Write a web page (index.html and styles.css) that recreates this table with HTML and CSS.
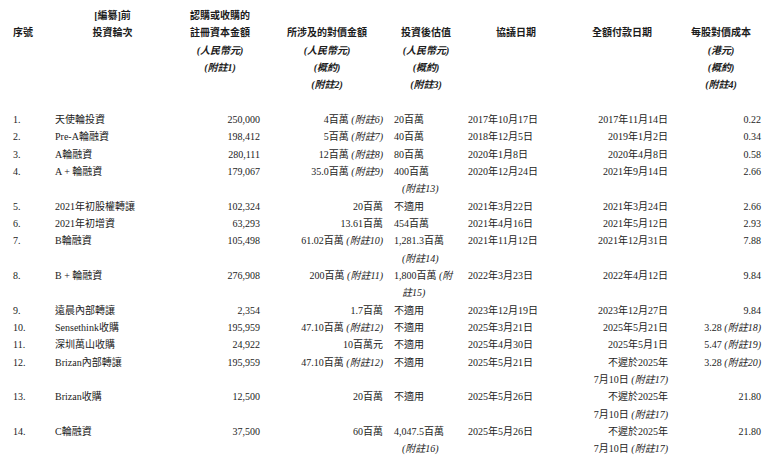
FILE: index.html
```html
<!DOCTYPE html>
<html lang="zh-Hant">
<head>
<meta charset="utf-8">
<link rel="stylesheet" href="styles.css">
</head>
<body>
<table class="tbl">
<colgroup>
<col class="c1"><col class="c2"><col class="c3"><col class="c4"><col class="c5"><col class="c6"><col class="c7"><col class="c8">
</colgroup>
<thead>
<tr>
<th class="h1 skip">序號</th>
<th>[編纂]前<br>投資輪次</th>
<th>認購或收購的<br>註冊資本金額<br><i>(人民幣元)</i><br><i>(附註1)</i></th>
<th class="skip">所涉及的對價金額<br><i>(人民幣元)</i><br><i>(概約)</i><br><i>(附註2)</i></th>
<th class="skip">投資後估值<br><i>(人民幣元)</i><br><i>(概約)</i><br><i>(附註3)</i></th>
<th class="skip">協議日期</th>
<th class="skip">全額付款日期</th>
<th class="skip">每股對價成本<br><i>(港元)</i><br><i>(概約)</i><br><i>(附註4)</i></th>
</tr>
<tr class="blank"><td colspan="8"></td></tr>
</thead>
<tbody>
<tr><td>1.</td><td>天使輪投資</td><td>250,000</td><td>4百萬 <i>(附註6)</i></td><td>20百萬</td><td>2017年10月17日</td><td>2017年11月14日</td><td>0.22</td></tr>
<tr><td>2.</td><td>Pre-A輪融資</td><td>198,412</td><td>5百萬 <i>(附註7)</i></td><td>40百萬</td><td>2018年12月5日</td><td>2019年1月2日</td><td>0.34</td></tr>
<tr><td>3.</td><td>A輪融資</td><td>280,111</td><td>12百萬 <i>(附註8)</i></td><td>80百萬</td><td>2020年1月8日</td><td>2020年4月8日</td><td>0.58</td></tr>
<tr><td>4.</td><td>A + 輪融資</td><td>179,067</td><td>35.0百萬 <i>(附註9)</i></td><td>400百萬<span class="ind"><i>(附註13)</i></span></td><td>2020年12月24日</td><td>2021年9月14日</td><td>2.66</td></tr>
<tr><td>5.</td><td>2021年初股權轉讓</td><td>102,324</td><td>20百萬</td><td>不適用</td><td>2021年3月22日</td><td>2021年3月24日</td><td>2.66</td></tr>
<tr><td>6.</td><td>2021年初增資</td><td>63,293</td><td>13.61百萬</td><td>454百萬</td><td>2021年4月16日</td><td>2021年5月12日</td><td>2.93</td></tr>
<tr><td>7.</td><td>B輪融資</td><td>105,498</td><td>61.02百萬 <i>(附註10)</i></td><td>1,281.3百萬<span class="ind"><i>(附註14)</i></span></td><td>2021年11月12日</td><td>2021年12月31日</td><td>7.88</td></tr>
<tr><td>8.</td><td>B + 輪融資</td><td>276,908</td><td>200百萬 <i>(附註11)</i></td><td>1,800百萬 <i>(附</i><span class="ind"><i>註15)</i></span></td><td>2022年3月23日</td><td>2022年4月12日</td><td>9.84</td></tr>
<tr><td>9.</td><td>遠晨內部轉讓</td><td>2,354</td><td>1.7百萬</td><td>不適用</td><td>2023年12月19日</td><td>2023年12月27日</td><td>9.84</td></tr>
<tr><td>10.</td><td>Sensethink收購</td><td>195,959</td><td>47.10百萬 <i>(附註12)</i></td><td>不適用</td><td>2025年3月21日</td><td>2025年5月21日</td><td>3.28 <i>(附註18)</i></td></tr>
<tr><td>11.</td><td>深圳萬山收購</td><td>24,922</td><td>10百萬元</td><td>不適用</td><td>2025年4月30日</td><td>2025年5月1日</td><td>5.47 <i>(附註19)</i></td></tr>
<tr><td>12.</td><td>Brizan內部轉讓</td><td>195,959</td><td>47.10百萬 <i>(附註12)</i></td><td>不適用</td><td>2025年5月21日</td><td>不遲於2025年<br>7月10日 <i>(附註17)</i></td><td>3.28 <i>(附註20)</i></td></tr>
<tr><td>13.</td><td>Brizan收購</td><td>12,500</td><td>20百萬</td><td>不適用</td><td>2025年5月26日</td><td>不遲於2025年<br>7月10日 <i>(附註17)</i></td><td>21.80</td></tr>
<tr><td>14.</td><td>C輪融資</td><td>37,500</td><td>60百萬</td><td>4,047.5百萬<span class="ind"><i>(附註16)</i></span></td><td>2025年5月26日</td><td>不遲於2025年<br>7月10日 <i>(附註17)</i></td><td>21.80</td></tr>
</tbody>
</table>
</body>
</html>
```
FILE: styles.css
```css
html, body {
  margin: 0;
  padding: 0;
  background: #ffffff;
}
body {
  padding-top: 7px;
  font-family: "Liberation Serif", "Noto Sans CJK TC", serif;
  font-size: 10px;
  color: #1c1c1c;
}
.tbl {
  border-collapse: collapse;
  table-layout: fixed;
  width: 762px;
  line-height: 17.33px;
}
.c1 { width: 55px; }
.c2 { width: 115px; }
.c3 { width: 100px; }
.c4 { width: 114px; }
.c5 { width: 84px; }
.c6 { width: 96px; }
.c7 { width: 116px; }
.c8 { width: 82px; }
.tbl th, .tbl td {
  padding: 0;
  vertical-align: top;
  white-space: nowrap;
}
.tbl th {
  font-weight: bold;
  text-align: center;
}
.tbl th.skip { padding-top: 17.33px; }
.tbl th.h1 { text-align: left; padding-left: 13px; }
.blank td { height: 17.33px; }
.tbl i { font-style: italic; }
.tbl tbody td:nth-child(1) { padding-left: 13px; }
.tbl tbody td:nth-child(3) { text-align: right; padding-right: 10px; }
.tbl tbody td:nth-child(4) { text-align: right; padding-right: 1px; }
.tbl tbody td:nth-child(5) { padding-left: 10px; }
.tbl tbody td:nth-child(7) { text-align: right; padding-right: 12px; }
.tbl tbody td:nth-child(8) { text-align: right; padding-right: 1px; }
.ind { display: block; padding-left: 8px; }
```
